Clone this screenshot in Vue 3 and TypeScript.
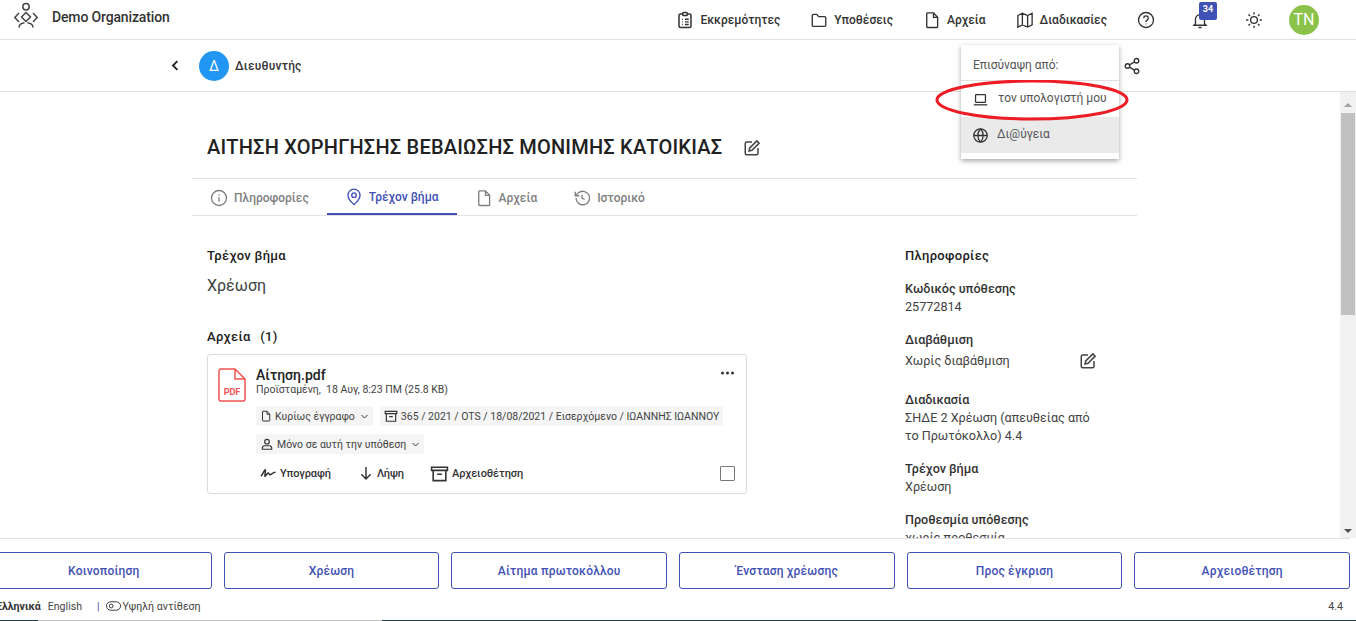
<script setup lang="ts">
const actions = ['Κοινοποίηση', 'Χρέωση', 'Αίτημα πρωτοκόλλου', 'Ένσταση χρέωσης', 'Προς έγκριση', 'Αρχειοθέτηση']
</script>

<template>
  <div class="page">
    <header class="topbar">
      <svg class="logo" viewBox="0 0 24 26" fill="none" stroke="#444" stroke-width="1.5">
        <circle cx="12" cy="4.700" r="3.200" />
        <path d="M12 10.500l4.500 4.500-4.500 4.500L7.500 15z" />
        <path d="M5 11L.8 15.500 5 20M19 11l4.200 4.500L19 20" />
        <path d="M5 25.500c0-2.500 2-4.300 5.500-4.800M19 25.500c0-2.500-2-4.300-5.500-4.800" />
      </svg>
      <span class="org">Demo Organization</span>
      <nav class="nav">
        <a class="nav-item">
          <svg viewBox="0 0 24 24" fill="none" stroke="#333" stroke-width="2">
            <rect x="4" y="4" width="16" height="18" rx="2" />
            <rect x="9" y="2" width="6" height="4" rx="1" fill="#fff" />
            <path d="M8 11h1M12 11h5M8 14.500h1M12 14.500h5M8 18h1M12 18h5" stroke-width="1.700" />
          </svg>
          Εκκρεμότητες
        </a>
        <a class="nav-item">
          <svg viewBox="0 0 24 24" fill="none" stroke="#333" stroke-width="1.800">
            <path d="M3 6a1.500 1.500 0 0 1 1.500-1.500H9l2.500 3h8A1.500 1.500 0 0 1 21 9v10a1.500 1.500 0 0 1-1.500 1.500h-15A1.500 1.500 0 0 1 3 19z" />
          </svg>
          Υποθέσεις
        </a>
        <a class="nav-item">
          <svg viewBox="0 0 24 24" fill="none" stroke="#333" stroke-width="1.800">
            <path d="M5 3.500a1 1 0 0 1 1-1h8l5.500 6V21a1 1 0 0 1-1 1H6a1 1 0 0 1-1-1zM14 2.500V8.500h5.500" />
          </svg>
          Αρχεία
        </a>
        <a class="nav-item">
          <svg viewBox="0 0 24 24" fill="none" stroke="#333" stroke-width="1.800">
            <path d="M2.500 6l6-3 7 3 6-3v15.500l-6 3-7-3-6 3zM8.500 3v15.500M15.500 6v15.500" />
          </svg>
          Διαδικασίες
        </a>
        <svg class="nav-icon help" viewBox="0 0 24 24" fill="none" stroke="#333" stroke-width="1.800">
          <circle cx="12" cy="12" r="10" />
          <path d="M9 9.500a3 3 0 1 1 4.500 2.600c-1 .6-1.500 1.100-1.500 2.400" />
          <path d="M12 17v.8" />
        </svg>
        <div class="bell">
          <svg class="nav-icon" viewBox="0 0 24 24" fill="none" stroke="#333" stroke-width="1.800">
            <path d="M6 17V11a6 6 0 0 1 12 0v6l2 2H4zM10 22h4" />
          </svg>
          <span class="badge">34</span>
        </div>
        <svg class="nav-icon sun" viewBox="0 0 24 24" fill="none" stroke="#333" stroke-width="1.800">
          <circle cx="12" cy="12" r="4.500" />
          <path d="M12 1.500v3M12 19.500v3M1.500 12h3M19.500 12h3M4.600 4.600l2.100 2.100M17.300 17.300l2.100 2.100M4.600 19.400l2.100-2.100M17.300 6.700l2.100-2.100" />
        </svg>
        <div class="avatar">TN</div>
      </nav>
    </header>

    <div class="subbar">
      <svg class="back" viewBox="0 0 24 24" fill="none" stroke="#222" stroke-width="3">
        <path d="M15 5l-7 7 7 7" />
      </svg>
      <div class="role-badge">Δ</div>
      <span class="role">Διευθυντής</span>
      <svg class="share" viewBox="0 0 24 24" fill="none" stroke="#333" stroke-width="1.800">
        <circle cx="18" cy="5" r="3" />
        <circle cx="6" cy="12" r="3" />
        <circle cx="18" cy="19" r="3" />
        <path d="M8.600 10.500l6.800-4M8.600 13.500l6.800 4" />
      </svg>
    </div>

    <main class="body">
      <div class="scroll">
        <div class="content">
          <div class="title-row">
            <h1>ΑΙΤΗΣΗ ΧΟΡΗΓΗΣΗΣ ΒΕΒΑΙΩΣΗΣ ΜΟΝΙΜΗΣ ΚΑΤΟΙΚΙΑΣ</h1>
            <svg class="edit" viewBox="0 0 24 24" fill="none" stroke="#444" stroke-width="2">
              <path d="M12 4H5a2 2 0 0 0-2 2v13a2 2 0 0 0 2 2h13a2 2 0 0 0 2-2v-7" />
              <path d="M18.500 2.500l3 3L12 15l-4 1 1-4z" />
            </svg>
          </div>

          <div class="tabs">
            <a class="tab">
              <svg viewBox="0 0 24 24" fill="none" stroke="currentColor" stroke-width="1.800">
                <circle cx="12" cy="12" r="10" />
                <path d="M12 11v6M12 7v1.500" />
              </svg>
              Πληροφορίες
            </a>
            <a class="tab active">
              <svg viewBox="0 0 24 24" fill="none" stroke="currentColor" stroke-width="1.800">
                <path d="M12 22s8-7 8-12.500a8 8 0 0 0-16 0C4 15 12 22 12 22z" />
                <circle cx="12" cy="9.500" r="3" />
              </svg>
              Τρέχον βήμα
            </a>
            <a class="tab">
              <svg viewBox="0 0 24 24" fill="none" stroke="currentColor" stroke-width="1.800">
                <path d="M5 3.500a1 1 0 0 1 1-1h8l5.500 6V21a1 1 0 0 1-1 1H6a1 1 0 0 1-1-1zM14 2.500V8.500h5.500" />
              </svg>
              Αρχεία
            </a>
            <a class="tab">
              <svg viewBox="0 0 24 24" fill="none" stroke="currentColor" stroke-width="1.800">
                <path d="M4 12a9 9 0 1 0 2.800-6.500L3 9M3 3.500V9h5.500M12 7.500V12l3.500 2" />
              </svg>
              Ιστορικό
            </a>
          </div>

          <div class="columns">
            <section class="left">
              <h2>Τρέχον βήμα</h2>
              <p class="step">Χρέωση</p>
              <h2 class="files-head">Αρχεία <span class="count">(1)</span></h2>

              <article class="file">
                <div class="file-top">
                  <svg class="pdf" viewBox="0 0 28 34" fill="none" stroke="#ef5350" stroke-width="1.500">
                    <path d="M1 3a2 2 0 0 1 2-2h14l10 10v20a2 2 0 0 1-2 2H3a2 2 0 0 1-2-2zM17 1v10h10" />
                    <text x="14" y="27" text-anchor="middle" class="pdf-text">PDF</text>
                  </svg>
                  <div class="file-info">
                    <div class="file-name">Αίτηση.pdf</div>
                    <div class="file-meta">Προϊσταμένη, &nbsp;18 Αυγ, 8:23 ΠΜ (25.8 KB)</div>
                  </div>
                  <svg class="more" viewBox="0 0 14 4" fill="#333">
                    <circle cx="2" cy="2" r="1.500" />
                    <circle cx="7" cy="2" r="1.500" />
                    <circle cx="12" cy="2" r="1.500" />
                  </svg>
                </div>
                <div class="chips">
                  <span class="chip">
                    <svg viewBox="0 0 24 24" fill="none" stroke="#333" stroke-width="2">
                      <path d="M5 3.500a1 1 0 0 1 1-1h8l5.500 6V21a1 1 0 0 1-1 1H6a1 1 0 0 1-1-1zM14 2.500V8.500h5.500" />
                    </svg>
                    Κυρίως έγγραφο
                    <svg class="caret" viewBox="0 0 12 12" fill="none" stroke="#333" stroke-width="1.300"><path d="M2 4l4 4 4-4" /></svg>
                  </span>
                  <span class="chip">
                    <svg class="box" viewBox="0 0 24 24" fill="none" stroke="#333" stroke-width="2">
                      <path d="M2 4h20v4H2zM4 8v13h16V8M9 13h6" />
                    </svg>
                    365 / 2021 / OTS / 18/08/2021 / Εισερχόμενο / ΙΩΑΝΝΗΣ ΙΩΑΝΝΟΥ
                  </span>
                  <span class="chip">
                    <svg class="box" viewBox="0 0 24 24" fill="none" stroke="#333" stroke-width="2">
                      <circle cx="12" cy="8" r="4" />
                      <path d="M4 21v-2a4 4 0 0 1 4-4h8a4 4 0 0 1 4 4v2z" />
                    </svg>
                    Μόνο σε αυτή την υπόθεση
                    <svg class="caret" viewBox="0 0 12 12" fill="none" stroke="#333" stroke-width="1.300"><path d="M2 4l4 4 4-4" /></svg>
                  </span>
                </div>
                <div class="file-actions">
                  <a class="file-action sign">
                    <svg viewBox="0 0 20 12" fill="none" stroke="#333" stroke-width="1.800">
                      <path d="M1 10c2-2 4-8 5-8s-1 8 0 8 2-4 3.500-4 1 2 2.500 2 3-3 6.500-3" />
                    </svg>
                    Υπογραφή
                  </a>
                  <a class="file-action down">
                    <svg viewBox="0 0 24 24" fill="none" stroke="#333" stroke-width="2.200">
                      <path d="M12 3v18M5 14l7 7 7-7" />
                    </svg>
                    Λήψη
                  </a>
                  <a class="file-action archive">
                    <svg viewBox="0 0 24 24" fill="none" stroke="#333" stroke-width="2">
                      <path d="M2 4h20v4H2zM4 8v13h16V8M9 13h6" />
                    </svg>
                    Αρχειοθέτηση
                  </a>
                  <span class="check"></span>
                </div>
              </article>
            </section>

            <aside class="right">
              <h2>Πληροφορίες</h2>
              <div class="info">
                <h3>Κωδικός υπόθεσης</h3>
                <p>25772814</p>
              </div>
              <div class="info class-info">
                <h3>Διαβάθμιση</h3>
                <div class="class-row">
                  <p>Χωρίς διαβάθμιση</p>
                  <svg class="edit" viewBox="0 0 24 24" fill="none" stroke="#444" stroke-width="2">
                    <path d="M12 4H5a2 2 0 0 0-2 2v13a2 2 0 0 0 2 2h13a2 2 0 0 0 2-2v-7" />
                    <path d="M18.500 2.500l3 3L12 15l-4 1 1-4z" />
                  </svg>
                </div>
              </div>
              <div class="info">
                <h3>Διαδικασία</h3>
                <p>ΣΗΔΕ 2 Χρέωση (απευθείας από το Πρωτόκολλο) 4.4</p>
              </div>
              <div class="info">
                <h3>Τρέχον βήμα</h3>
                <p>Χρέωση</p>
              </div>
              <div class="info">
                <h3>Προθεσμία υπόθεσης</h3>
                <p>χωρίς προθεσμία</p>
              </div>
            </aside>
          </div>
        </div>
      </div>

      <div class="scrollbar">
        <span class="arrow up"></span>
        <span class="thumb"></span>
        <span class="arrow down-arrow"></span>
      </div>
    </main>

    <div class="action-bar">
      <button v-for="a in actions" :key="a" class="action">{{ a }}</button>
    </div>

    <footer class="footer">
      <b>Ελληνικά</b>
      <span class="lang">English</span>
      <span class="sep">|</span>
      <svg class="contrast" viewBox="0 0 16 10" fill="none" stroke="#333" stroke-width="1">
        <rect x="0.500" y="0.500" width="15" height="9" rx="4.500" />
        <circle cx="5.500" cy="5" r="2" />
      </svg>
      <span>Υψηλή αντίθεση</span>
      <span class="version">4.4</span>
    </footer>
    <div class="taskbar">
      <span class="seg-a"></span>
      <span class="seg-b"></span>
      <span class="seg-c"></span>
    </div>

    <div class="popup">
      <div class="popup-head">Επισύναψη από:</div>
      <div class="popup-row">
        <svg viewBox="0 0 24 24" fill="none" stroke="#333" stroke-width="1.800">
          <rect x="5" y="5" width="14" height="11" rx="1" />
          <path d="M2.500 19.500h19" />
        </svg>
        <span class="pc">τον υπολογιστή μου</span>
      </div>
      <div class="popup-row hover">
        <svg viewBox="0 0 24 24" fill="none" stroke="#333" stroke-width="1.800">
          <circle cx="12" cy="12" r="9.500" />
          <path d="M2.500 12h19M12 2.500c-5 5.500-5 13.500 0 19M12 2.500c5 5.500 5 13.500 0 19" />
        </svg>
        <span>Δι@ύγεια</span>
      </div>
    </div>
    <svg class="ring" viewBox="0 0 194 42" fill="none">
      <ellipse cx="97" cy="20" rx="95" ry="19" stroke="#ee1c25" stroke-width="3" />
    </svg>
  </div>
</template>

<style scoped>
.page {
  position: relative;
  width: 1356px;
  height: 621px;
  overflow: hidden;
  display: flex;
  flex-direction: column;
  background: #fff;
  color: #212121;
  font-family: Roboto, "Liberation Sans", sans-serif;
  font-size: 13px;
}

.topbar {
  flex: none;
  height: 40px;
  box-sizing: border-box;
  display: flex;
  align-items: center;
  padding: 0 37px 0 14px;
  border-bottom: 1px solid #e0e0e0;
}

.logo {
  width: 24px;
  height: 26px;
  margin-top: -9px;
}

.org {
  margin: -5px 0 0 14px;
  font-size: 14px;
  font-weight: 500;
  letter-spacing: -0.15px;
  color: #333;
}

.nav {
  margin-left: auto;
  display: flex;
  align-items: center;
}

.nav-item {
  display: flex;
  align-items: center;
  gap: 6px;
  margin-right: 30px;
  font-size: 12px;
  font-weight: 500;
  color: #333;
}

.nav-item svg {
  width: 18px;
  height: 18px;
}

.nav-item:nth-child(4) {
  margin-right: 0;
}

.nav-icon {
  width: 18px;
  height: 18px;
}

.help {
  margin-left: 30px;
}

.bell {
  position: relative;
  margin-left: 36px;
  height: 18px;
}

.badge {
  position: absolute;
  left: 8px;
  top: -9px;
  width: 18px;
  height: 18px;
  border-radius: 2px;
  background: #3f51b5;
  color: #fff;
  font-size: 9px;
  font-weight: 700;
  line-height: 14px;
  text-align: center;
}

.sun {
  margin-left: 36px;
}

.avatar {
  margin-left: 26px;
  width: 30px;
  height: 30px;
  border-radius: 50%;
  background: #8bc34a;
  color: #fff;
  font-size: 16px;
  line-height: 30px;
  text-align: center;
}

.subbar {
  flex: none;
  height: 52px;
  box-sizing: border-box;
  display: flex;
  align-items: center;
  padding: 0 215px 0 168px;
  border-bottom: 1px solid #e0e0e0;
}

.back {
  width: 15px;
  height: 15px;
}

.role-badge {
  margin-left: 16px;
  width: 30px;
  height: 30px;
  border-radius: 50%;
  background: #2196f3;
  color: #fff;
  font-size: 14px;
  line-height: 30px;
  text-align: center;
}

.role {
  margin-left: 6px;
  font-size: 12px;
  font-weight: 500;
  letter-spacing: 0.2px;
  color: #333;
}

.share {
  margin-left: auto;
  width: 18px;
  height: 18px;
}

.body {
  flex: 1;
  min-height: 0;
  display: flex;
}

.scroll {
  flex: 1;
  min-width: 0;
  overflow: hidden;
}

.content {
  width: 945px;
  margin-left: 192px;
}

.title-row {
  height: 87px;
  box-sizing: border-box;
  display: flex;
  align-items: flex-start;
  padding: 43px 0 0 15px;
  border-bottom: 1px solid #e0e0e0;
}

h1 {
  margin: 0;
  font-size: 20px;
  font-weight: 500;
  line-height: 24px;
  letter-spacing: 0.2px;
  color: #212121;
}

.title-row .edit {
  margin: 4px 0 0 21px;
}

.edit {
  width: 18px;
  height: 18px;
}

.tabs {
  height: 36px;
  display: flex;
  border-bottom: 1px solid #e0e0e0;
}

.tab {
  display: flex;
  align-items: center;
  gap: 6px;
  box-sizing: border-box;
  padding: 2px 18px 0;
  font-size: 12px;
  font-weight: 500;
  color: #808080;
}

.tab svg {
  width: 18px;
  height: 18px;
}

.tab.active {
  color: #3f51b5;
  border-bottom: 2px solid #3f51b5;
  height: 36px;
}

.columns {
  display: flex;
  padding: 31px 0 0 15px;
}

.left {
  width: 698px;
  flex: none;
}

h2 {
  margin: 0;
  font-size: 13px;
  font-weight: 500;
  line-height: 17px;
  letter-spacing: 0.3px;
  color: #212121;
}

.step {
  margin: 12px 0 0;
  font-size: 16px;
  line-height: 20px;
  color: #424242;
}

.files-head {
  margin-top: 32px;
}

.count {
  margin-left: 6px;
}

.file {
  box-sizing: border-box;
  width: 540px;
  height: 140px;
  margin-top: 9px;
  padding: 13px 11px 0 10px;
  border: 1px solid #dcdcdc;
  border-radius: 3px;
}

.file-top {
  display: flex;
  align-items: flex-start;
}

.pdf {
  flex: none;
  width: 28px;
  height: 34px;
}

.pdf-text {
  fill: #ef5350;
  stroke: none;
  font-size: 9px;
  font-weight: 700;
}

.file-info {
  margin-left: 10px;
  flex: 1;
}

.file-name {
  font-size: 14px;
  font-weight: 500;
  line-height: 15px;
  color: #212121;
}

.file-meta {
  font-size: 10.5px;
  line-height: 14px;
  color: #424242;
}

.more {
  width: 15px;
  height: 4px;
  margin-top: 3px;
}

.chips {
  display: flex;
  flex-wrap: wrap;
  gap: 8px 7px;
  margin: 4px 0 0 38px;
}

.chip {
  display: flex;
  align-items: center;
  gap: 3px;
  height: 20px;
  padding: 0 4px;
  background: #f5f5f5;
  border-radius: 3px;
  font-size: 10.5px;
  color: #424242;
  white-space: nowrap;
}

.chip svg {
  width: 12px;
  height: 12px;
}

.chip .box {
  width: 14px;
  height: 14px;
}

.chip .caret {
  width: 9px;
  height: 9px;
  margin-left: 2px;
}

.file-actions {
  display: flex;
  align-items: center;
  margin: 9px 0 0 42px;
  height: 20px;
}

.file-action {
  display: flex;
  align-items: center;
  gap: 3px;
  font-size: 11px;
  font-weight: 500;
  letter-spacing: -0.1px;
  color: #333;
}

.file-action svg {
  width: 16px;
  height: 16px;
}

.sign svg {
  width: 17px;
  height: 10px;
}

.down {
  margin-left: 27px;
}

.archive {
  margin-left: 26px;
}

.archive svg {
  width: 19px;
  height: 19px;
}

.check {
  margin-left: auto;
  width: 13px;
  height: 13px;
  border: 1px solid #777;
  border-radius: 1px;
}

.right {
  flex: 1;
}

.right h2 {
  margin-bottom: 16px;
}

.info {
  margin-bottom: 15px;
  width: 192px;
}

h3 {
  margin: 0;
  font-size: 12.6px;
  font-weight: 500;
  line-height: 18px;
  color: #333;
}

.info p {
  margin: 0;
  font-size: 12.6px;
  line-height: 18px;
  color: #424242;
}

.class-info {
  margin-bottom: 18px;
}

.class-row {
  display: flex;
  align-items: center;
  justify-content: space-between;
  height: 24px;
}

.scrollbar {
  flex: none;
  width: 16px;
  display: flex;
  flex-direction: column;
  align-items: center;
  background: #f1f1f1;
}

.thumb {
  width: 14px;
  height: 202px;
  margin-top: 6px;
  background: #c1c1c1;
}

.arrow {
  width: 0;
  height: 0;
  border-left: 4px solid transparent;
  border-right: 4px solid transparent;
}

.up {
  margin-top: 11px;
  border-bottom: 4px solid #a3a3a3;
}

.down-arrow {
  margin-top: auto;
  margin-bottom: 5px;
  border-top: 4px solid #505050;
}

.action-bar {
  flex: none;
  height: 59px;
  box-sizing: border-box;
  width: 1354px;
  margin-left: -4px;
  display: flex;
  gap: 12px;
  padding-top: 13px;
  background: #fff;
  position: relative;
  border-top: 1px solid #e0e0e0;
}

.action {
  flex: 1;
  height: 37px;
  background: #fff;
  border: 1px solid #3f51b5;
  border-radius: 3px;
  color: #3f51b5;
  font-family: inherit;
  font-size: 12px;
  font-weight: 500;
  letter-spacing: 0.2px;
}

.footer {
  flex: none;
  height: 23px;
  display: flex;
  align-items: center;
  margin-left: -4px;
  padding: 0 13px 5px 0;
  width: 1360px;
  box-sizing: border-box;
  font-size: 10.6px;
  color: #424242;
}

.footer b {
  font-weight: 700;
  color: #333;
}

.lang {
  margin-left: 7px;
}

.sep {
  margin-left: 15px;
  color: #3f51b5;
}

.contrast {
  width: 15px;
  height: 10px;
  margin: 0 2px 0 6px;
}

.version {
  margin-left: auto;
}

.taskbar {
  flex: none;
  height: 1px;
  display: flex;
}

.seg-a {
  width: 38px;
  background: #1f3a44;
}

.seg-b {
  width: 344px;
  background: #c4c4c4;
}

.seg-c {
  flex: 1;
  background: #1f3a44;
}

.popup {
  position: absolute;
  left: 961px;
  top: 45px;
  width: 158px;
  height: 114px;
  background: #fff;
  box-shadow: 0 2px 5px rgba(0, 0, 0, 0.35);
  font-size: 12px;
  color: #555;
}

.popup-head {
  height: 36px;
  box-sizing: border-box;
  padding: 13px 0 0 12px;
  border-bottom: 1px solid #e0e0e0;
}

.popup-row {
  height: 36px;
  display: flex;
  align-items: center;
  padding-left: 11px;
  gap: 8px;
}

.popup-row svg {
  width: 17px;
  height: 17px;
  flex: none;
}

.popup-row .pc {
  margin: -3px 0 0 1px;
  white-space: nowrap;
}

.hover {
  background: #eaeaea;
}

.hover span {
  margin-top: -3px;
}

.ring {
  position: absolute;
  left: 935px;
  top: 80px;
  width: 194px;
  height: 42px;
}
</style>
